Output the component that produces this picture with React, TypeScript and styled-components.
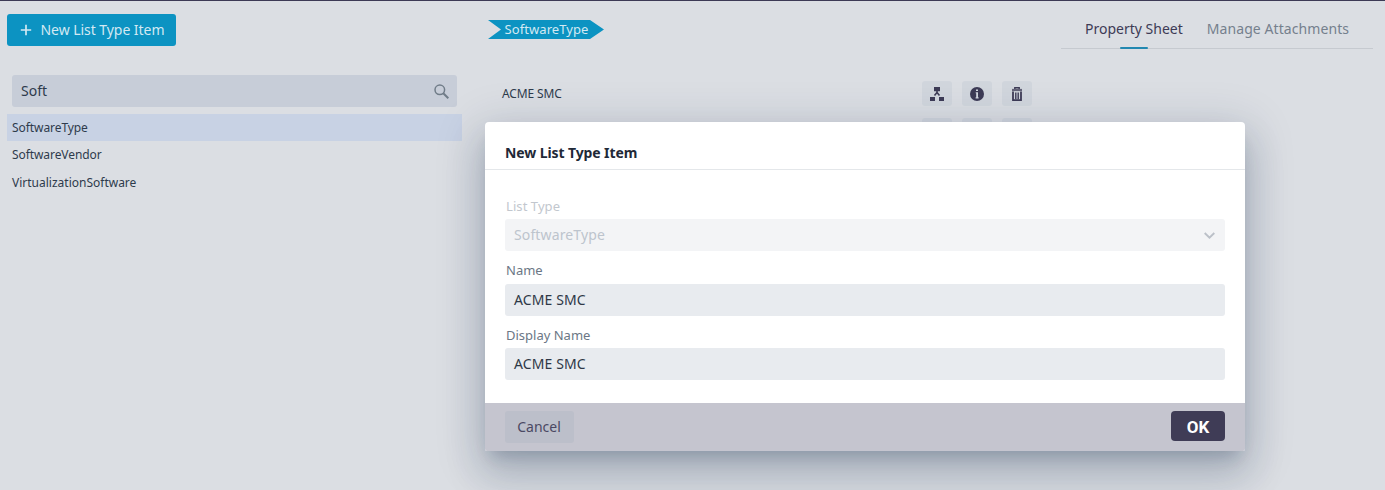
import React from 'react';
import styled, { createGlobalStyle } from 'styled-components';

const Global = createGlobalStyle`
  * { box-sizing: border-box; }
  body { margin: 0; background: #dbdee3; overflow: hidden; }
  button, input { font: inherit; margin: 0; }
`;

const Page = styled.div`
  position: relative;
  display: flex;
  height: 490px;
  border-top: 1px solid #3c3a55;
  background: #dbdee3;
  color: #2e3b4c;
  font-family: 'Noto Sans', sans-serif;
  overflow: hidden;
`;

const Label = styled.span<{ $size?: number; $track?: number }>`
  font-size: ${(p) => p.$size ?? 14}px;
  letter-spacing: ${(p) => p.$track ?? 0}px;
  line-height: 20px;
  white-space: nowrap;
`;

const Sidebar = styled.aside`
  width: 462px;
  padding: 13px 0 0 7px;
`;

const NewButton = styled.button`
  display: flex;
  align-items: center;
  width: 169px;
  height: 32px;
  padding: 0 0 0 13px;
  gap: 8.5px;
  border: 0;
  border-radius: 3px;
  background: #0c93c2;
  color: #d3e9f3;
`;

const Search = styled.div`
  display: flex;
  align-items: center;
  justify-content: space-between;
  width: 445px;
  height: 32px;
  margin: 29px 0 7px 5px;
  padding: 0 8.5px 0 9px;
  border-radius: 3px;
  background: #c7cdd8;
`;

const Item = styled.div<{ $active?: boolean }>`
  display: flex;
  align-items: center;
  height: 27.47px;
  padding-left: 5px;
  background: ${(p) => (p.$active ? '#c8d2e4' : 'transparent')};
`;

const Main = styled.main`
  flex: 1;
  padding: 19px 0 0 26px;
`;

const TopRow = styled.header`
  display: flex;
  justify-content: space-between;
  height: 29px;
  margin-right: 12px;
`;

const Crumb = styled.div`
  width: 116px;
  height: 19px;
  padding: 0 0 2px 16.5px;
  background: #0c93c2;
  color: #d3e9f3;
  clip-path: polygon(0 0, 102px 0, 100% 50%, 102px 100%, 0 100%, 13px 50%);
  display: flex;
  align-items: center;
`;

const Tabs = styled.nav`
  display: flex;
  gap: 24px;
  width: 312px;
  padding-left: 24px;
  border-bottom: 1px solid #c6cad0;
`;

const Tab = styled.div<{ $active?: boolean }>`
  display: flex;
  flex-direction: column;
  align-items: center;
  justify-content: space-between;
  height: 29px;
  margin-top: -1px;
  color: ${(p) => (p.$active ? '#3d3b56' : '#75808d')};
`;

const Underline = styled.i`
  width: 28px;
  height: 2px;
  margin-bottom: -1px;
  border-radius: 1px;
  background: #2288b1;
`;

const Row = styled.div`
  display: flex;
  justify-content: space-between;
  align-items: center;
  width: 530px;
  height: 25px;
  margin: 32px 0 0 14px;
  & + & { margin-top: 12px; }
`;

const Actions = styled.div`
  display: flex;
  gap: 10px;
  margin-left: auto;
`;

const Action = styled.button`
  display: grid;
  place-items: center;
  width: 30px;
  height: 25px;
  padding: 0;
  border: 0;
  border-radius: 3px;
  background: #d1d6dd;
`;

const Dialog = styled.section`
  position: absolute;
  left: 485px;
  top: 121px;
  width: 760px;
  height: 329px;
  display: flex;
  flex-direction: column;
  border-radius: 4px 4px 2px 2px;
  background: #fff;
  box-shadow:
    0 11px 15px -7px rgba(20, 45, 75, 0.2),
    0 24px 38px 3px rgba(20, 45, 75, 0.16),
    0 9px 46px 8px rgba(20, 45, 75, 0.14);
`;

const DialogHead = styled.h2`
  display: flex;
  align-items: center;
  height: 48px;
  margin: 0;
  padding: 15px 20px 0;
  border-bottom: 1px solid #e4e7ea;
  color: #1f2937;
  font-weight: 700;
`;

const DialogBody = styled.div`
  flex: 1;
  padding: 26px 20px 0;
`;

const Field = styled.label<{ $disabled?: boolean }>`
  display: flex;
  flex-direction: column;
  height: 64.4px;
  color: ${(p) => (p.$disabled ? '#c2c7ce' : '#6b7785')};
  & > span { padding-left: 1px; }
`;

const Control = styled.div<{ $disabled?: boolean }>`
  display: flex;
  align-items: center;
  justify-content: space-between;
  flex: none;
  height: 32px;
  margin-top: 3.4px;
  padding: 0 10px 0 9px;
  border-radius: 3px;
  background: ${(p) => (p.$disabled ? '#f3f4f6' : '#e8ebef')};
  color: ${(p) => (p.$disabled ? '#bdc4cd' : '#2e3847')};
`;

const DialogFoot = styled.footer`
  display: flex;
  justify-content: space-between;
  height: 48px;
  padding: 8px 20px;
  border-radius: 0 0 2px 2px;
  background: #c5c5cf;
`;

const Cancel = styled.button`
  width: 69px;
  height: 32px;
  padding: 0 1px 2px 0;
  border: 0;
  border-radius: 3px;
  background: #bcbfca;
  color: #4b4963;
`;

const Ok = styled.button`
  width: 54px;
  height: 30px;
  padding: 2px 0 0;
  border: 0;
  border-radius: 4px;
  background: #3f3c56;
  color: #fff;
  font-family: Roboto, sans-serif;
  font-weight: 700;
`;

const Plus = () => (
  <svg width="12" height="12" viewBox="0 0 12 12" stroke="currentColor" strokeWidth="1.7">
    <path d="M6 .8v10.4M.8 6h10.4" />
  </svg>
);

const Magnifier = () => (
  <svg width="15" height="15" viewBox="0 0 15 15" fill="none" stroke="#707c88">
    <circle cx="5.8" cy="5.8" r="4.8" strokeWidth="1.5" />
    <path d="M9.3 9.3l5 5" strokeWidth="2" />
  </svg>
);

const TreeIcon = () => (
  <svg width="14" height="14" viewBox="0 0 14 14" fill="#3d3b56">
    <path d="M4 0h6v4.2H4zM0 10h5v4H0zM9 10h5v4H9z" />
    <path d="M7 4v2M7 5.5L4.5 8.5M7 5.5l2.5 3" stroke="#3d3b56" strokeWidth="1.6" />
  </svg>
);

const InfoIcon = () => (
  <svg width="14" height="14" viewBox="0 0 14 14">
    <circle cx="7" cy="7" r="7" fill="#3d3b56" />
    <path d="M6 2.5h2v1.6H6zM5.7 5.3H8v5h.6v1.1H5.6v-1.1h.6v-4h-.5z" fill="#d3d8e0" />
  </svg>
);

const TrashIcon = () => (
  <svg width="12" height="14" viewBox="0 0 12 14" fill="none" stroke="#3d3b56">
    <path d="M3.8 2V.7h4.4V2" strokeWidth="1.4" />
    <path d="M1 3h10" strokeWidth="2.2" opacity=".75" />
    <path d="M2 4.5v8.6h8V4.5" strokeWidth="1.8" />
    <path d="M4.8 5.5v6.8M7.2 5.5v6.8" strokeWidth="1.4" />
  </svg>
);

const Chevron = () => (
  <svg width="11" height="7" viewBox="0 0 11 7" fill="none" stroke="#bbc0c8" strokeWidth="1.9">
    <path d="M.7 1l4.8 4.6L10.3 1" />
  </svg>
);

const RowActions = () => (
  <Actions>
    <Action aria-label="Hierarchy"><TreeIcon /></Action>
    <Action aria-label="Info"><InfoIcon /></Action>
    <Action aria-label="Delete"><TrashIcon /></Action>
  </Actions>
);

export default function App() {
  return (
    <>
      <Global />
      <Page>
        <Sidebar>
          <NewButton><Plus /><Label $track={-0.05}>New List Type Item</Label></NewButton>
          <Search><Label>Soft</Label><Magnifier /></Search>
          <Item $active><Label $size={12} $track={-0.07}>SoftwareType</Label></Item>
          <Item><Label $size={12} $track={-0.08}>SoftwareVendor</Label></Item>
          <Item><Label $size={12}>VirtualizationSoftware</Label></Item>
        </Sidebar>
        <Main>
          <TopRow>
            <Crumb><Label $size={13} $track={0.08}>SoftwareType</Label></Crumb>
            <Tabs>
              <Tab $active><Label>Property Sheet</Label><Underline /></Tab>
              <Tab><Label $track={0.08}>Manage Attachments</Label></Tab>
            </Tabs>
          </TopRow>
          <Row><Label $size={12} $track={-0.12}>ACME SMC</Label><RowActions /></Row>
          <Row><RowActions /></Row>
        </Main>
        <Dialog role="dialog">
          <DialogHead><Label $track={-0.1}>New List Type Item</Label></DialogHead>
          <DialogBody>
            <Field $disabled>
              <Label $size={13} $track={0.08}>List Type</Label>
              <Control $disabled><Label $track={0.13}>SoftwareType</Label><Chevron /></Control>
            </Field>
            <Field>
              <Label $size={13}>Name</Label>
              <Control><Label $track={0.1}>ACME SMC</Label></Control>
            </Field>
            <Field>
              <Label $size={13}>Display Name</Label>
              <Control><Label $track={0.1}>ACME SMC</Label></Control>
            </Field>
          </DialogBody>
          <DialogFoot>
            <Cancel><Label>Cancel</Label></Cancel>
            <Ok><Label $size={17}>OK</Label></Ok>
          </DialogFoot>
        </Dialog>
      </Page>
    </>
  );
}
